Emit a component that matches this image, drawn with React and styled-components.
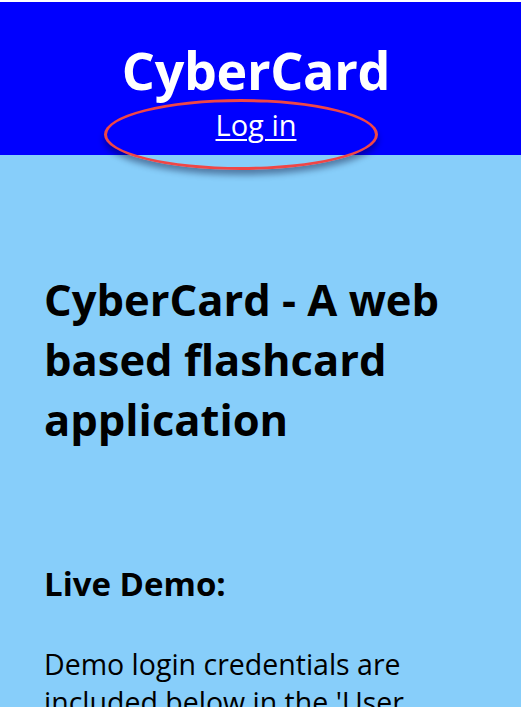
import React from "react";
import styled, { createGlobalStyle } from "styled-components";

const GlobalStyle = createGlobalStyle`
  html, body {
    margin: 0;
    padding: 0;
    background: #ffffff;
  }
  body {
    font-family: "Open Sans", "Noto Sans", sans-serif;
    padding-top: 2px;
  }
`;

const Page = styled.div`
  background: #87cefa;
  min-height: 705px;
`;

const Header = styled.header`
  position: relative;
  background: #0000ff;
  height: 153px;
  padding-right: 9px;
  box-sizing: border-box;
  display: flex;
  flex-direction: column;
  align-items: center;
  color: #ffffff;
`;

const Brand = styled.h1`
  margin: 35px 0 0;
  font-size: 52px;
  font-weight: 700;
  line-height: 66px;
  letter-spacing: -0.3px;
`;

const LoginLink = styled.a`
  color: #ffffff;
  font-size: 29px;
  line-height: 34px;
  margin-top: 5px;
  text-decoration: underline;
  text-underline-offset: 3px;
  text-decoration-thickness: 2px;
  cursor: pointer;
`;

const Highlight = styled.span`
  position: absolute;
  left: 104px;
  top: 97px;
  width: 274px;
  height: 71px;
  border: 3px solid #f04646;
  border-radius: 50%;
  box-sizing: border-box;
  box-shadow: 0 5px 6px rgba(0, 0, 40, 0.4);
  pointer-events: none;
`;

const Main = styled.main`
  padding: 115px 44px 0;
  color: #000000;
`;

const Title = styled.h2`
  margin: 0;
  font-size: 43.5px;
  font-weight: 700;
  line-height: 60px;
`;

const SectionTitle = styled.h3`
  margin: 113px 0 0;
  font-size: 33px;
  font-weight: 700;
  line-height: 42px;
`;

const Paragraph = styled.p`
  margin: 40px 0 0;
  font-size: 28.5px;
  line-height: 38px;
`;

export default function App() {
  return (
    <>
      <GlobalStyle />
      <Page>
        <Header>
          <Brand>CyberCard</Brand>
          <LoginLink>Log in</LoginLink>
          <Highlight />
        </Header>
        <Main>
          <Title>CyberCard - A web based flashcard application</Title>
          <SectionTitle>Live Demo:</SectionTitle>
          <Paragraph>
            Demo login credentials are included below in the 'User
            Stories' section.
          </Paragraph>
        </Main>
      </Page>
    </>
  );
}
